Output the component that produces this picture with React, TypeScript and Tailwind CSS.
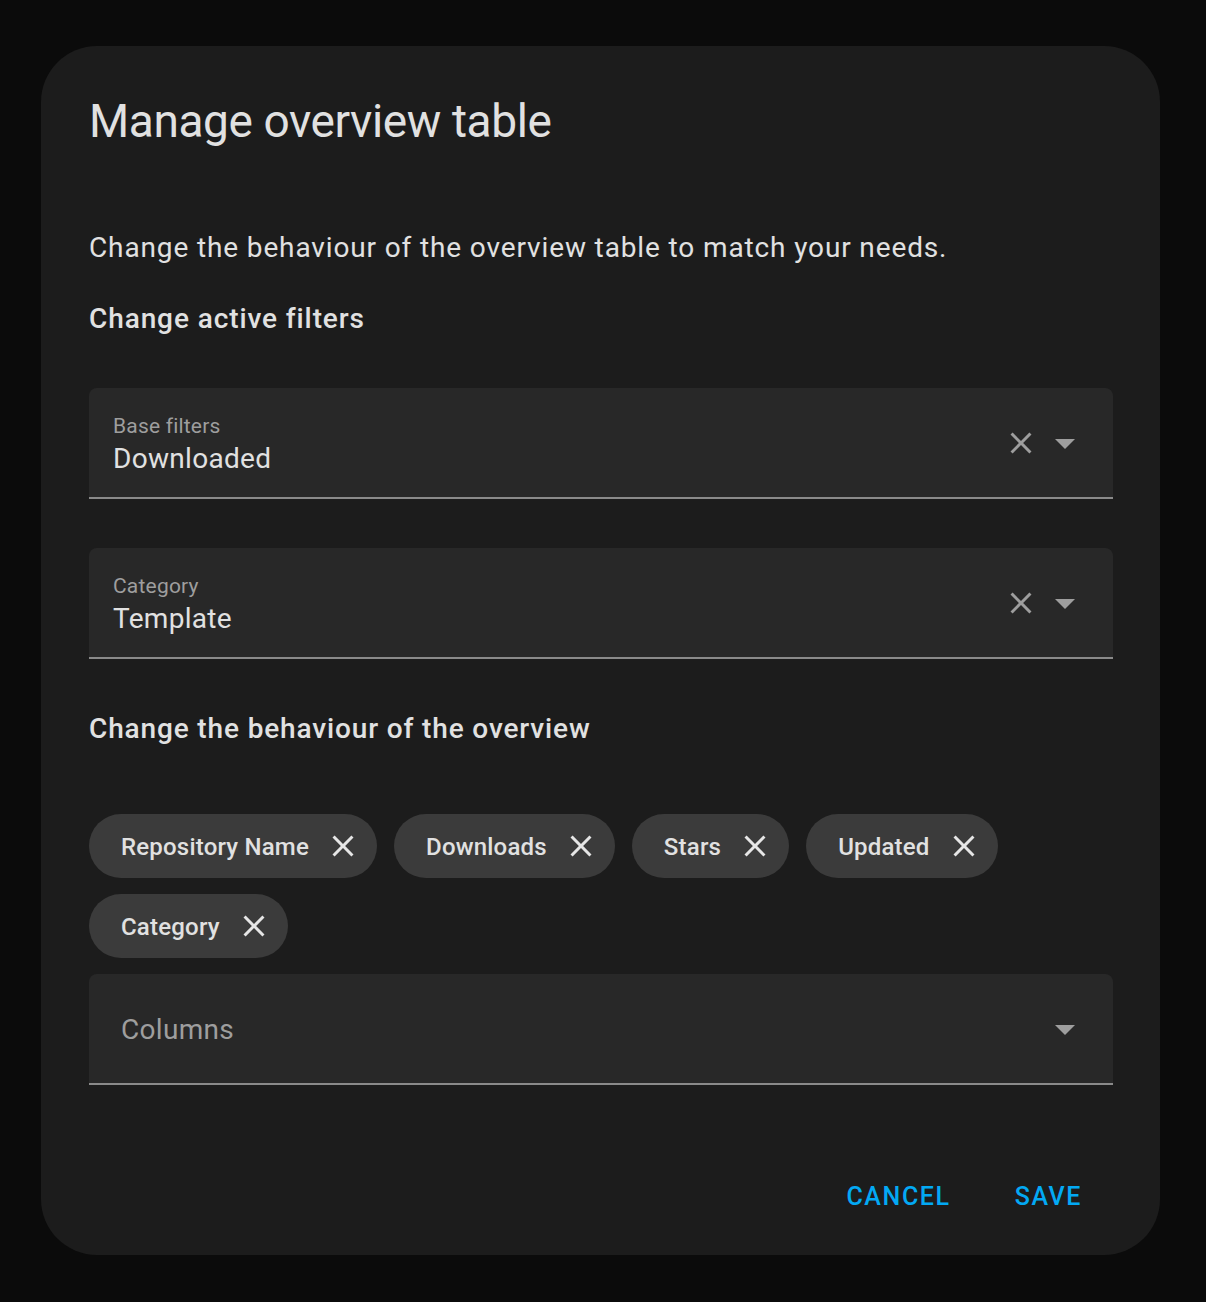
import React from "react";

const CloseIcon = ({ size, color }: { size: number; color: string }) => (
  <svg width={size} height={size} viewBox="0 0 24 24" fill={color}>
    <path d="M19,6.41L17.59,5L12,10.59L6.41,5L5,6.41L10.59,12L5,17.59L6.41,19L12,13.41L17.59,19L19,17.59L13.41,12L19,6.41Z" />
  </svg>
);

const MenuDown = () => (
  <svg width={48} height={48} viewBox="0 0 24 24" fill="#9e9e9e">
    <path d="M7,10L12,15L17,10H7Z" />
  </svg>
);

const Field = ({ label, value }: { label: string; value: string }) => (
  <div className="flex h-[111px] items-stretch rounded-t-[8px] border-b-2 border-[#8a8a8a] bg-[#282828]">
    <div className="flex flex-1 flex-col pl-[24px] pt-[26px]">
      <div className="text-[21px] leading-[24px] tracking-[0.2px] text-[#9e9e9e]">{label}</div>
      <div className="mt-[3px] text-[28px] leading-[36px] tracking-[0.3px] text-[#e1e1e1]">{value}</div>
    </div>
    <div className="flex items-center pr-[24px]">
      <div className="mr-[2px] flex h-[36px] w-[36px] items-center justify-center">
        <CloseIcon size={40} color="#9e9e9e" />
      </div>
      <MenuDown />
    </div>
  </div>
);

const Chip = ({ text }: { text: string }) => (
  <div className="flex h-[64px] items-center rounded-full bg-[#3b3b3b] pl-[32px] pr-[16px]">
    <span className="pt-[1px] text-[24px] font-medium tracking-[0.2px] text-[#e1e1e1]">{text}</span>
    <div className="ml-[16px] flex h-[36px] w-[36px] items-center justify-center">
      <CloseIcon size={38} color="#e6e6e6" />
    </div>
  </div>
);

export default function App() {
  return (
    <div
      className="min-h-[1302px] bg-[#0b0b0b] pt-[46px]"
      style={{ fontFamily: "Roboto, 'Noto Sans', sans-serif" }}
    >
      <div className="ml-[41px] flex h-[1209px] w-[1119px] flex-col rounded-[56px] bg-[#1c1c1c] pl-[48px] pr-[47px] pt-[51px]">
        <h1 className="text-[46px] font-normal leading-[48px] tracking-[-0.4px] text-[#e1e1e1]">
          Manage overview table
        </h1>
        <p className="mt-[83px] text-[28px] leading-[40px] tracking-[0.87px] text-[#e1e1e1]">
          Change the behaviour of the overview table to match your needs.
        </p>
        <h2 className="mt-[31px] text-[28px] font-medium leading-[40px] tracking-[0.9px] text-[#e1e1e1]">
          Change active filters
        </h2>
        <div className="mt-[49px]">
          <Field label="Base filters" value="Downloaded" />
        </div>
        <div className="mt-[49px]">
          <Field label="Category" value="Template" />
        </div>
        <h2 className="mt-[50px] text-[28px] font-medium leading-[40px] tracking-[0.86px] text-[#e1e1e1]">
          Change the behaviour of the overview
        </h2>
        <div className="mt-[65px] flex flex-wrap gap-x-[17px] gap-y-[16px]">
          <Chip text="Repository Name" />
          <Chip text="Downloads" />
          <Chip text="Stars" />
          <Chip text="Updated" />
          <Chip text="Category" />
        </div>
        <div className="mt-[16px] flex h-[111px] items-center rounded-t-[8px] border-b-2 border-[#8a8a8a] bg-[#282828] pl-[32px] pr-[24px]">
          <span className="flex-1 pt-[3px] text-[28px] tracking-[0.3px] text-[#9e9e9e]">Columns</span>
          <MenuDown />
        </div>
        <div className="mt-[96px] flex justify-end pr-[31px]">
          <button className="text-[25px] font-medium leading-[32px] tracking-[1.6px] text-[#03a9f4]">
            CANCEL
          </button>
          <button className="ml-[64px] text-[25px] font-medium leading-[32px] tracking-[1.6px] text-[#03a9f4]">
            SAVE
          </button>
        </div>
      </div>
    </div>
  );
}
